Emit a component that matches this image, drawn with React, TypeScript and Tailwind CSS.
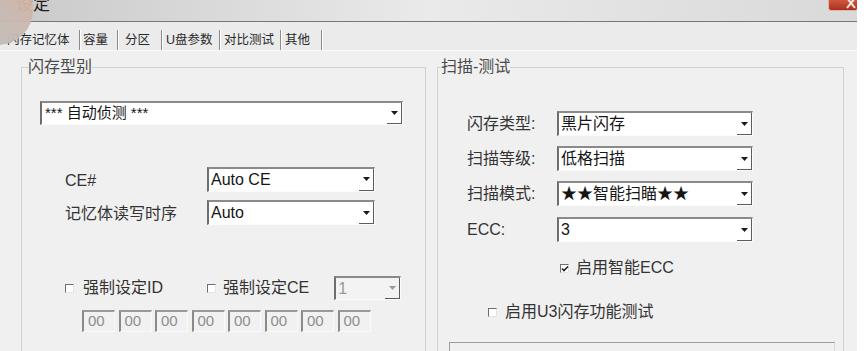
import React from "react";

const FONT = "font-['Liberation_Sans','Noto_Sans_CJK_SC',sans-serif]";

function Arrow({ disabled }: { disabled?: boolean }) {
  return (
    <svg width="7" height="4" viewBox="0 0 7 4">
      <polygon points="0,0 7,0 3.5,4" fill={disabled ? "#9a9a9a" : "#1a1a1a"} />
    </svg>
  );
}

function Combo({
  text,
  className,
  disabled,
  textClass,
}: {
  text: string;
  className: string;
  disabled?: boolean;
  textClass?: string;
}) {
  return (
    <div
      className={`flex shrink-0 border-t-2 border-l-2 border-r border-b border-t-[#8a8a8a] border-l-[#6e6e6e] border-r-[#fbfbfb] border-b-[#fbfbfb] ${
        disabled ? "bg-[#f3f3f3]" : "bg-white"
      } ${className}`}
    >
      <span
        className={`flex-1 flex items-center pl-[2px] whitespace-nowrap overflow-hidden ${
          disabled ? "text-[#9a9a9a]" : "text-[#151515]"
        } ${textClass ?? "text-[16px]"}`}
      >
        {text}
      </span>
      <div className="w-[15px] flex items-center justify-center border-r border-b border-r-[#5c5c5c] border-b-[#5c5c5c]">
        <Arrow disabled={disabled} />
      </div>
    </div>
  );
}

function Check({ checked }: { checked?: boolean }) {
  return (
    <div className="relative w-[9px] h-[9px] shrink-0 bg-white border-t border-l border-r border-b border-t-[#6f6f6f] border-l-[#6f6f6f] border-r-[#e4e4e4] border-b-[#e4e4e4]">
      {checked && (
        <svg className="absolute left-[0px] top-[0px]" width="8" height="8" viewBox="0 0 8 8">
          <polyline points="1,3.5 3,5.5 7,1.5" fill="none" stroke="#222" strokeWidth="1.6" />
        </svg>
      )}
    </div>
  );
}

function HexBox() {
  return (
    <div className="w-[33px] h-[22px] flex items-center pl-[4px] text-[15px] text-[#8e8e8e] bg-[#f1f1f1] border-t-2 border-l-2 border-r border-b border-t-[#9a9a9a] border-l-[#8a8a8a] border-r-[#fafafa] border-b-[#fafafa]">
      00
    </div>
  );
}

const tabs: { label: string; w: string; pl: string }[] = [
  { label: "闪存记忆体", w: "w-[79px]", pl: "pl-[7px]" },
  { label: "容量", w: "w-[36px]", pl: "pl-[2px]" },
  { label: "分区", w: "w-[42px]", pl: "pl-[6px]" },
  { label: "U盘参数", w: "w-[56px]", pl: "pl-[3px]" },
  { label: "对比测试", w: "w-[59px]", pl: "pl-[3px]" },
  { label: "其他", w: "w-[39px]", pl: "pl-[3px]" },
];

export default function App() {
  return (
    <div className={`relative w-[864px] h-[351px] overflow-hidden bg-white ${FONT}`}>
      {/* touch indicator overlay */}
      <div className="absolute left-[-37px] top-[-25px] w-[70px] h-[70px] rounded-full z-10 opacity-95 bg-[#bdbdbd] bg-linear-to-bl from-[#dcb29c] via-[#c9bab2] via-45% to-[#bcbcbc]" />

      <div className="w-[857px] h-full flex flex-col bg-[#f0f0f0]">
        {/* title bar */}
        <div className="relative h-[22px] shrink-0 flex justify-between items-start border-b border-b-[#777] bg-[#dcdcdc] bg-linear-to-r from-[#c9c9c9] via-[#eaeaea] to-[#d9d9d9]">
          <span className="ml-[16px] -mt-[4px] text-[17px] leading-[17px] text-[#1e1e1e]">设定</span>
          <div className="relative w-[29px] h-[11px] rounded-b-[3px] bg-[#c1402a] bg-linear-to-b from-[#d0573e] to-[#a9301f] border-b border-l border-[#e2b4a8] overflow-hidden">
            <svg className="absolute right-[1px] -top-[3px]" width="10" height="12" viewBox="0 0 10 12">
              <path d="M1 1 L9 11 M9 1 L1 11" stroke="#fbe9e4" strokeWidth="2" />
            </svg>
          </div>
        </div>

        {/* tab row */}
        <div className="h-[29px] shrink-0 flex items-end bg-[#ebebeb] border-b border-b-[#fbfbfb]">
          {tabs.map((t) => (
            <React.Fragment key={t.label}>
              <span className={`${t.w} ${t.pl} shrink-0 text-[12.5px] leading-[16px] mb-[2px] text-[#2a2a2a] whitespace-nowrap`}>
                {t.label}
              </span>
              <div className="w-[2px] h-[20px] shrink-0 border-l border-l-[#8c8c8c] border-r border-r-[#fdfdfd]" />
            </React.Fragment>
          ))}
        </div>

        {/* body */}
        <div className="flex-1 flex items-start pt-[16px] pl-[21px] gap-[11px]">
          {/* left group */}
          <div className="relative w-[405px] h-[320px] shrink-0 border border-[#d2d2d2]">
            <span className="absolute -top-[11px] left-[6px] bg-[#f0f0f0] text-[16px] leading-[20px] text-[#4a4a4a]">闪存型别</span>
            <div className="ml-[18px] mt-[33px]">
              <Combo text="*** 自动侦测 ***" className="w-[363px] h-[24px]" textClass="text-[15px] pl-[3px]" />
            </div>
            <div className="mt-[40px] flex items-center">
              <span className="ml-[43px] w-[142px] text-[16px] text-[#333] mt-[4px]">CE#</span>
              <Combo text="Auto CE" className="w-[168px] h-[25px]" />
            </div>
            <div className="mt-[6px] flex items-center">
              <span className="ml-[43px] w-[142px] text-[16px] text-[#333] mt-[3px]">记忆体读写时序</span>
              <Combo text="Auto" className="w-[168px] h-[25px]" />
            </div>
            <div className="mt-[50px] flex items-center">
              <div className="ml-[43px]">
                <Check />
              </div>
              <span className="ml-[9px] text-[16px] text-[#333]">强制设定ID</span>
              <div className="ml-[44px]">
                <Check />
              </div>
              <span className="ml-[7px] text-[16px] text-[#333]">强制设定CE</span>
              <Combo text="1" disabled className="ml-[25px] w-[67px] h-[24px]" />
            </div>
            <div className="mt-[10px] ml-[60px] flex gap-[3.5px]">
              {Array.from({ length: 8 }).map((_, i) => (
                <HexBox key={i} />
              ))}
            </div>
          </div>

          {/* right group */}
          <div className="relative w-[407px] h-[320px] shrink-0 border border-[#d2d2d2]">
            <span className="absolute -top-[11px] left-[3px] bg-[#f0f0f0] text-[16px] leading-[20px] text-[#4a4a4a]">扫描-测试</span>
            <div className="mt-[43px] flex items-center">
              <span className="ml-[29px] w-[90px] text-[16px] text-[#333]">闪存类型:</span>
              <Combo text="黑片闪存" className="w-[196px] h-[25px]" />
            </div>
            <div className="mt-[10px] flex items-center">
              <span className="ml-[29px] w-[90px] text-[16px] text-[#333]">扫描等级:</span>
              <Combo text="低格扫描" className="w-[196px] h-[25px]" />
            </div>
            <div className="mt-[10px] flex items-center">
              <span className="ml-[29px] w-[90px] text-[16px] text-[#333]">扫描模式:</span>
              <Combo text="★★智能扫瞄★★" className="w-[196px] h-[25px]" />
            </div>
            <div className="mt-[11px] flex items-center">
              <span className="ml-[29px] w-[90px] text-[16px] text-[#333]">ECC:</span>
              <Combo text="3" className="w-[196px] h-[25px]" />
            </div>
            <div className="mt-[18px] flex items-center h-[16px]">
              <div className="ml-[122px]">
                <Check checked />
              </div>
              <span className="ml-[7px] text-[16px] text-[#333]">启用智能ECC</span>
            </div>
            <div className="mt-[28px] flex items-center h-[16px]">
              <div className="ml-[50px]">
                <Check />
              </div>
              <span className="ml-[8px] text-[16px] text-[#333]">启用U3闪存功能测试</span>
            </div>
            <div className="mt-[22px] ml-[11px] w-[386px] h-[40px] border-t border-l border-r border-t-[#9c9c9c] border-l-[#9c9c9c] border-r-[#d8d8d8]" />
          </div>
        </div>
      </div>
    </div>
  );
}
